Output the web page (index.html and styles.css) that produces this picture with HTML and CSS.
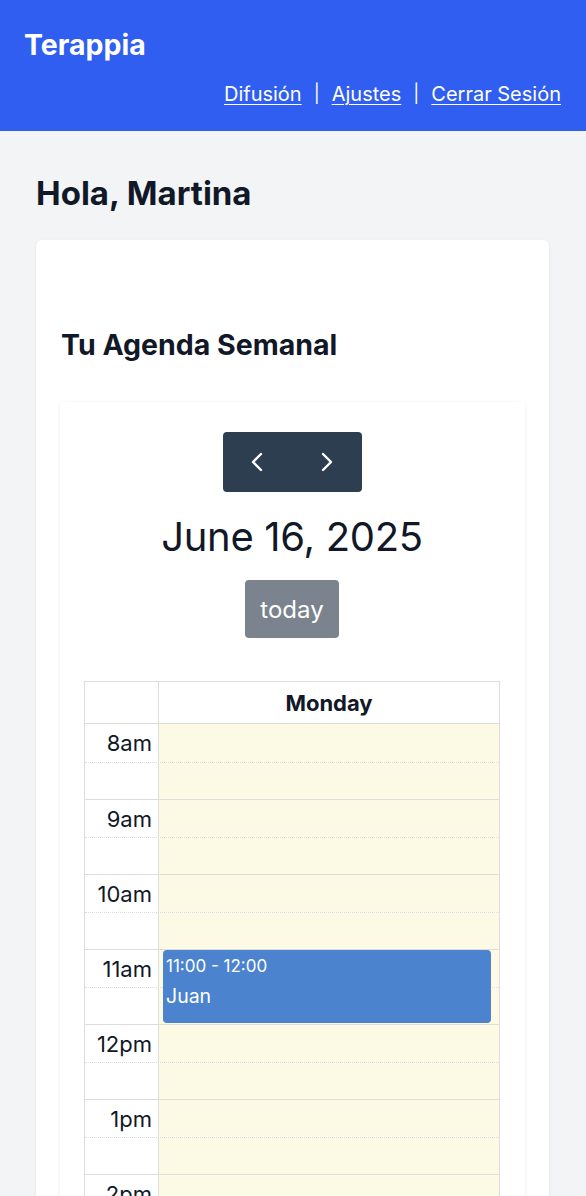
FILE: index.html
```html
<!DOCTYPE html>
<html lang="es">
  <head>
    <meta charset="UTF-8" />
    <meta name="viewport" content="width=device-width, initial-scale=1.0" />
    <title>Terappia</title>
    <link rel="stylesheet" href="styles.css">
  </head>
  <body>
    <header class="topbar">
      <div class="brand">Terappia</div>
      <nav class="topnav">
        <a href="#">Difusión</a>
        <span class="sep">|</span>
        <a href="#">Ajustes</a>
        <span class="sep">|</span>
        <a href="#">Cerrar Sesión</a>
      </nav>
    </header>

    <main class="container">
      <h1 class="greeting">Hola, Martina</h1>

      <section class="card">
        <h2 class="card-title">Tu Agenda Semanal</h2>

        <div class="calendar">
          <div class="toolbar">
            <div class="btn-group">
              <button class="btn" aria-label="prev">
                <svg width="14" height="22" viewBox="0 0 14 22"><path d="M11 3 L3 11 L11 19" fill="none" stroke="#fff" stroke-width="2.4" stroke-linecap="round" stroke-linejoin="round"/></svg>
              </button>
              <button class="btn" aria-label="next">
                <svg width="14" height="22" viewBox="0 0 14 22"><path d="M3 3 L11 11 L3 19" fill="none" stroke="#fff" stroke-width="2.4" stroke-linecap="round" stroke-linejoin="round"/></svg>
              </button>
            </div>
            <div class="cal-title">June 16, 2025</div>
            <button class="btn btn-today">today</button>
          </div>

          <div class="grid">
            <div class="grid-head">
              <div class="axis"></div>
              <div class="day-name">Monday</div>
            </div>
            <div class="grid-body">
              <div class="slot hour"><div class="label">8am</div><div class="lane"></div></div>
              <div class="slot half"><div class="label"></div><div class="lane"></div></div>
              <div class="slot hour"><div class="label">9am</div><div class="lane"></div></div>
              <div class="slot half"><div class="label"></div><div class="lane"></div></div>
              <div class="slot hour"><div class="label">10am</div><div class="lane"></div></div>
              <div class="slot half"><div class="label"></div><div class="lane"></div></div>
              <div class="slot hour"><div class="label">11am</div><div class="lane"></div></div>
              <div class="slot half"><div class="label"></div><div class="lane"></div></div>
              <div class="slot hour"><div class="label">12pm</div><div class="lane"></div></div>
              <div class="slot half"><div class="label"></div><div class="lane"></div></div>
              <div class="slot hour"><div class="label">1pm</div><div class="lane"></div></div>
              <div class="slot half"><div class="label"></div><div class="lane"></div></div>
              <div class="slot hour"><div class="label">2pm</div><div class="lane"></div></div>
              <div class="slot half"><div class="label"></div><div class="lane"></div></div>
              <div class="slot hour"><div class="label">3pm</div><div class="lane"></div></div>
              <div class="slot half"><div class="label"></div><div class="lane"></div></div>

              <!-- 11:00 - 12:00 -->
              <div class="event" style="top: 226px; height: 73px;">
                <div class="event-time">11:00 - 12:00</div>
                <div class="event-title">Juan</div>
              </div>
            </div>
          </div>
        </div>
      </section>
    </main>
  </body>
</html>
```

FILE: styles.css
```css
*,
*::before,
*::after {
  box-sizing: border-box;
}

body {
  font-family: Inter, "Noto Sans", Arial, sans-serif;
  background: #f3f4f6;
  color: #111827;
  margin: 0;
  padding: 0;
}

/* Top bar */
.topbar {
  background: #2f5ef1;
  color: #fff;
  padding: 29px 25px 23px 24px;
  height: 131px;
}

.brand {
  font-size: 28.5px;
  font-weight: 700;
  line-height: 32px;
}

.topnav {
  margin-top: 19px;
  display: flex;
  justify-content: flex-end;
  align-items: center;
  gap: 12px;
  font-size: 20px;
  line-height: 28px;
}

.topnav a {
  color: #fff;
  text-decoration: underline;
  text-underline-offset: 3px;
  text-decoration-thickness: 1px;
}

.sep {
  color: #fff;
  font-size: 18px;
}

/* Page */
.container {
  padding: 0 37px 0 36px;
}

.greeting {
  margin: 42px 0 27px;
  font-size: 33px;
  line-height: 40px;
  font-weight: 700;
}

.card {
  background: #fff;
  border-radius: 6px;
  box-shadow: 0 1px 3px rgba(0, 0, 0, 0.08), 0 1px 2px rgba(0, 0, 0, 0.04);
  padding: 89px 24px 24px 24px;
}

.card-title {
  margin: 0 0 41px 1px;
  font-size: 28.5px;
  line-height: 32px;
  font-weight: 700;
}

.calendar {
  background: #fff;
  border-radius: 4px;
  box-shadow: 0 1px 4px rgba(0, 0, 0, 0.08);
  padding: 30px 25px 40px 24px;
}

.toolbar {
  display: flex;
  flex-direction: column;
  align-items: center;
}

.btn-group {
  display: flex;
}

.btn {
  background: #2c3e50;
  border: none;
  color: #fff;
  font-family: inherit;
  display: flex;
  align-items: center;
  justify-content: center;
}

.btn-group .btn {
  width: 69.5px;
  height: 60px;
}

.btn-group .btn:first-child {
  border-radius: 4px 0 0 4px;
}

.btn-group .btn:last-child {
  border-radius: 0 4px 4px 0;
}

.cal-title {
  margin-top: 21px;
  font-size: 40px;
  line-height: 48px;
  letter-spacing: -0.3px;
}

.btn-today {
  margin-top: 19px;
  width: 94px;
  height: 58px;
  border-radius: 4px;
  background: #7b848e;
  font-size: 24px;
}

/* Time grid */
.grid {
  margin-top: 43px;
  border: 1px solid #dddddd;
}

.grid-head {
  display: grid;
  grid-template-columns: 74px 1fr;
  height: 42px;
  border-bottom: 1px solid #dddddd;
}

.axis {
  border-right: 1px solid #dddddd;
}

.day-name {
  display: flex;
  align-items: center;
  justify-content: center;
  font-size: 22px;
  font-weight: 700;
}

.grid-body {
  position: relative;
}

.slot {
  display: grid;
  grid-template-columns: 74px 1fr;
  height: 37.5px;
}

.slot.hour {
  border-top: 1px solid #dddddd;
}

.slot.hour:first-child {
  border-top: none;
}

.slot.half {
  border-top: 1px dotted #dddddd;
}

.label {
  border-right: 1px solid #dddddd;
  text-align: right;
  padding: 6px 6px 0 0;
  font-size: 22px;
  line-height: 26px;
}

.lane {
  background: #fcf9e4;
}

.event {
  position: absolute;
  left: 78px;
  right: 8px;
  background: #4b83cf;
  border-radius: 4px;
  color: #fff;
  padding: 5px 3px;
}

.event-time {
  font-size: 17px;
  line-height: 22px;
}

.event-title {
  margin-top: 8px;
  font-size: 19.5px;
  line-height: 22px;
}
```
